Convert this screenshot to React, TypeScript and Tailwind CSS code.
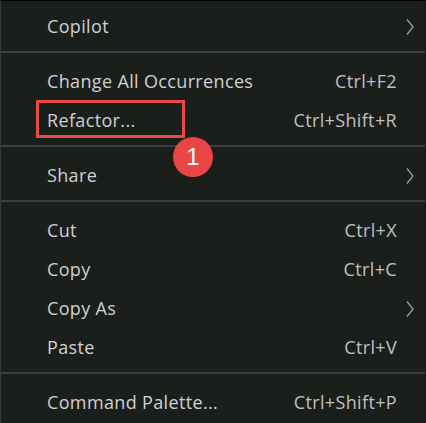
import React from "react";

type Item = { label?: string; shortcut?: string; sub?: boolean; sep?: boolean };

const items: Item[] = [
  { label: "Copilot", sub: true },
  { sep: true },
  { label: "Change All Occurrences", shortcut: "Ctrl+F2" },
  { label: "Refactor...", shortcut: "Ctrl+Shift+R" },
  { sep: true },
  { label: "Share", sub: true },
  { sep: true },
  { label: "Cut", shortcut: "Ctrl+X" },
  { label: "Copy", shortcut: "Ctrl+C" },
  { label: "Copy As", sub: true },
  { label: "Paste", shortcut: "Ctrl+V" },
  { sep: true },
  { label: "Command Palette...", shortcut: "Ctrl+Shift+P" },
];

function Chevron() {
  return (
    <svg width="10" height="18" viewBox="0 0 10 18" fill="none">
      <path d="M2 1.5 L8 9 L2 16.5" stroke="#9a9a9a" strokeWidth="1.3" />
    </svg>
  );
}

export default function App() {
  return (
    <div
      className="relative w-[426px] h-[423px] bg-[#1b1f1c] border-t border-t-black border-l border-l-[#3a3a3a] border-r border-r-[#141414] overflow-hidden pt-[6px]"
      style={{ fontFamily: '"Open Sans", "Noto Sans", sans-serif' }}
    >
      {items.map((it, i) =>
        it.sep ? (
          <div key={i} className="h-[16px] pt-[5px]">
            <div className="h-[2px] bg-[#3b3f3c]" />
          </div>
        ) : (
          <div key={i} className="h-[39px] flex items-center pl-[46px] pr-[28px] text-[18px] tracking-[0.35px]">
            <span className="flex-1 text-[#d0d0d0]">{it.label}</span>
            {it.shortcut && <span className="text-[#c0c0c0]">{it.shortcut}</span>}
            {it.sub && (
              <span className="-mr-[18px] flex items-center">
                <Chevron />
              </span>
            )}
          </div>
        )
      )}
      <div className="absolute left-[35px] top-[99px] w-[149px] h-[38px] border-[3px] border-[#f04848]" />
      <div
        className="absolute left-[172px] top-[136px] w-[40px] h-[40px] rounded-full bg-[#e94545] flex items-center justify-center text-white text-[24px]"
        style={{ fontFamily: '"Liberation Sans", Arial, sans-serif' }}
      >
        1
      </div>
    </div>
  );
}
